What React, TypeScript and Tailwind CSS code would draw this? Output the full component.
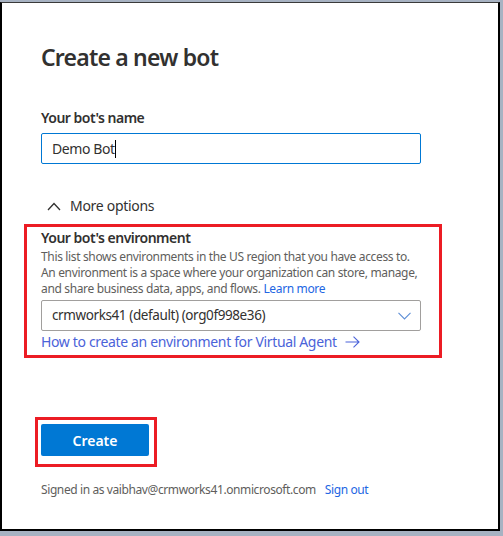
import React from 'react';

export default function App() {
  return (
    <div className="w-[503px] h-[536px] bg-[#a7b2c2] pt-[2px] overflow-hidden font-['Noto_Sans','Open_Sans',sans-serif] text-[#323130]">
      <div className="w-[500px] h-[529px] bg-white border-t border-t-[#3a3a3a] border-l-2 border-r-2 border-b-2 border-black pl-[39px] pt-[38px]">
        {/* Title */}
        <h1 className="text-[23px] leading-[32px] font-semibold tracking-[-0.8px]">Create a new bot</h1>

        {/* Bot name */}
        <div className="mt-[35px]">
          <label className="block text-[14px] leading-[20px] font-semibold tracking-[-0.5px]">Your bot's name</label>
          <div className="mt-[5px] w-[380px] h-[31px] border border-[#0078d4] rounded-[2px] flex items-center px-[10px] text-[14px] tracking-[-0.4px]">
            <span>Demo Bot</span>
            <span className="w-px h-[18px] bg-black" />
          </div>
        </div>

        {/* More options */}
        <div className="mt-[32px] flex items-center gap-[9px] pl-[6px] text-[14px] leading-[20px] tracking-[-0.3px]">
          <svg width="14" height="9" viewBox="0 0 14 9" fill="none">
            <path d="M1 8 L7 1.5 L13 8" stroke="#323130" strokeWidth="1.3" />
          </svg>
          <span>More options</span>
        </div>

        {/* Environment (highlighted) */}
        <div className="mt-[8px] -ml-[17px] w-[418px] border-[3px] border-[#ec1c24] pl-[14px] pt-[1px] pb-[2px]">
          <div className="text-[14px] leading-[20px] font-semibold tracking-[-0.5px]">Your bot's environment</div>
          <p className="text-[12px] leading-[16px] text-[#605e5c] mt-[1px] tracking-[-0.35px]">
            This list shows environments in the US region that you have access to.
            <br />
            An environment is a space where your organization can store, manage,
            <br />
            and share business data, apps, and flows.{' '}
            <span className="text-[#2266e3]">Learn more</span>
          </p>
          <div className="mt-[3px] w-[380px] h-[31px] border border-[#a19f9d] rounded-[2px] flex items-center justify-between pl-[10px] pr-[9px] text-[13.5px] tracking-[-0.4px]">
            <span>crmworks41 (default) (org0f998e36)</span>
            <svg width="13" height="8" viewBox="0 0 13 8" fill="none">
              <path d="M0.5 0.8 L6.5 7 L12.5 0.8" stroke="#5e8fd6" strokeWidth="1.1" />
            </svg>
          </div>
          <div className="flex items-center gap-[8px] text-[14px] leading-[22px] text-[#4b63d9] tracking-[-0.35px]">
            <span>How to create an environment for Virtual Agent</span>
            <svg width="15" height="12" viewBox="0 0 15 12" fill="none">
              <path d="M0.5 6 H14 M8.5 0.7 L14 6 L8.5 11.3" stroke="#4b63d9" strokeWidth="1.1" />
            </svg>
          </div>
        </div>

        {/* Create */}
        <div className="mt-[59px] -ml-[6px] w-[122px] h-[50px] border-[3px] border-[#ec1c24] pl-[3px] pt-[4px]">
          <button className="w-[108px] h-[32px] bg-[#0078d4] rounded-[2px] text-white text-[14px] font-semibold">
            Create
          </button>
        </div>

        {/* Footer */}
        <div className="mt-[15px] text-[12px] leading-[16px] text-[#605e5c] tracking-[-0.4px]">
          Signed in as vaibhav@crmworks41.onmicrosoft.com
          <span className="ml-[9px] text-[#2266e3]">Sign out</span>
        </div>
      </div>
    </div>
  );
}
